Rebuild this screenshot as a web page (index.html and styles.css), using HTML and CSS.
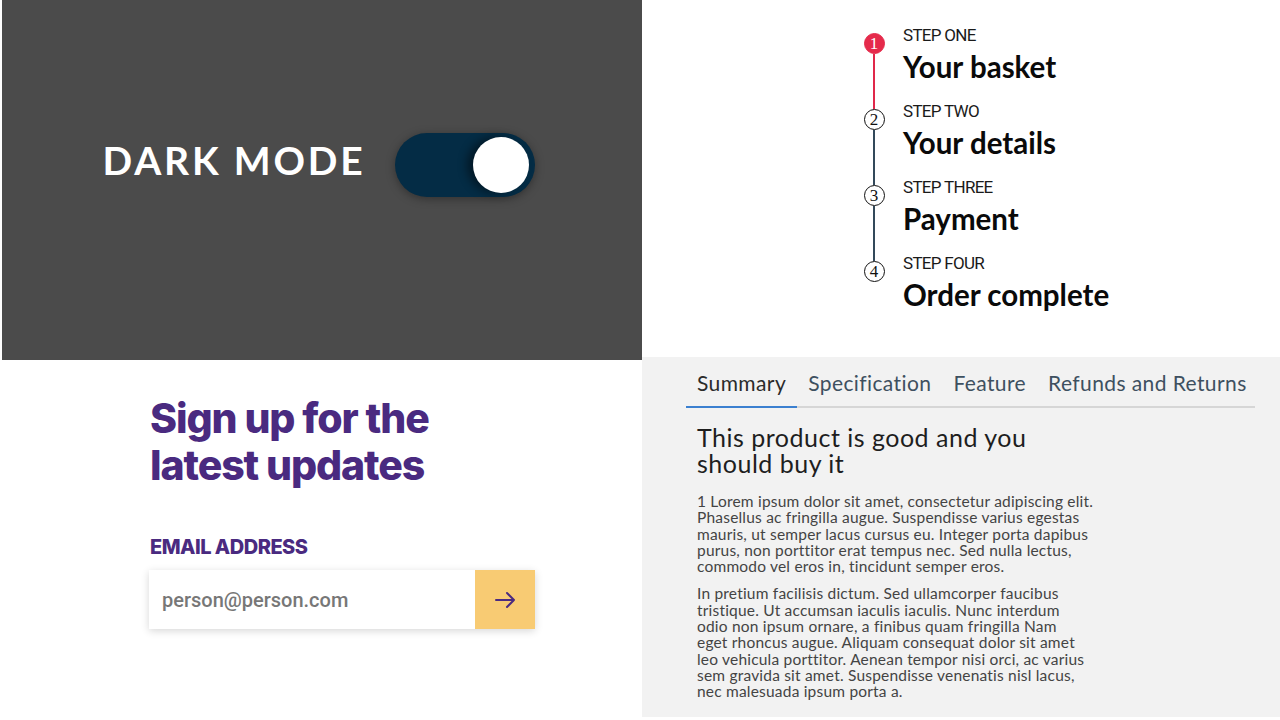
FILE: index.html
```html
<!DOCTYPE html>
<html lang="en">
<head>
<meta charset="utf-8">
<title>UI components</title>
<link rel="stylesheet" href="styles.css">
</head>
<body>
<main class="grid">
  <section class="panel panel-dark">
    <div class="mode">
      <span class="mode-label">DARK MODE</span>
      <button class="toggle" aria-pressed="true" aria-label="Dark mode"><span class="knob"></span></button>
    </div>
  </section>

  <section class="panel panel-steps">
    <ol class="steps">
      <li class="step done">
        <div class="marker"><span class="dot">1</span><span class="rail rail-red"></span></div>
        <div class="step-text"><span class="step-label">STEP ONE</span><span class="step-title">Your basket</span></div>
      </li>
      <li class="step">
        <div class="marker"><span class="dot">2</span><span class="rail"></span></div>
        <div class="step-text"><span class="step-label">STEP TWO</span><span class="step-title">Your details</span></div>
      </li>
      <li class="step">
        <div class="marker"><span class="dot">3</span><span class="rail"></span></div>
        <div class="step-text"><span class="step-label">STEP THREE</span><span class="step-title">Payment</span></div>
      </li>
      <li class="step last">
        <div class="marker"><span class="dot">4</span></div>
        <div class="step-text"><span class="step-label">STEP FOUR</span><span class="step-title">Order complete</span></div>
      </li>
    </ol>
  </section>

  <section class="panel panel-signup">
    <h2 class="signup-title">Sign up for the<br>latest updates</h2>
    <label class="signup-label" for="email">EMAIL ADDRESS</label>
    <div class="signup-field">
      <input id="email" class="signup-input" type="email" placeholder="person@person.com">
      <button class="signup-btn" aria-label="Submit">
        <svg width="24" height="24" viewBox="0 0 24 24" fill="none" stroke="#4b2a80" stroke-width="2" stroke-linecap="round" stroke-linejoin="round"><path d="M3 12h18M14 5l7 7-7 7"/></svg>
      </button>
    </div>
  </section>

  <section class="panel panel-tabs">
    <nav class="tabs">
      <a class="tab active">Summary</a>
      <a class="tab">Specification</a>
      <a class="tab">Feature</a>
      <a class="tab">Refunds and Returns</a>
    </nav>
    <article class="tab-body">
      <h3 class="tab-heading">This product is good and you<br>should buy it</h3>
      <p class="tab-text">1 Lorem ipsum dolor sit amet, consectetur adipiscing elit.<br>Phasellus ac fringilla augue. Suspendisse varius egestas<br>mauris, ut semper lacus cursus eu. Integer porta dapibus<br>purus, non porttitor erat tempus nec. Sed nulla lectus,<br>commodo vel eros in, tincidunt semper eros.</p>
      <p class="tab-text">In pretium facilisis dictum. Sed ullamcorper faucibus<br>tristique. Ut accumsan iaculis iaculis. Nunc interdum<br>odio non ipsum ornare, a finibus quam fringilla Nam<br>eget rhoncus augue. Aliquam consequat dolor sit amet<br>leo vehicula porttitor. Aenean tempor nisi orci, ac varius<br>sem gravida sit amet. Suspendisse venenatis nisl lacus,<br>nec malesuada ipsum porta a.</p>
    </article>
  </section>
</main>
</body>
</html>
```

FILE: styles.css
```css
* { box-sizing: border-box; }
html, body { margin: 0; padding: 0; background: #ffffff; }
body { width: 1280px; height: 720px; overflow: hidden; font-family: "Lato", "Liberation Sans", sans-serif; }

.grid {
  display: grid;
  grid-template-columns: 642px 638px;
  grid-template-rows: 360px 360px;
}

.panel { margin: 0; }

/* Dark mode */
.panel-dark {
  background: #4b4b4b;
  margin-left: 2px;
  display: flex;
  align-items: center;
  justify-content: center;
  padding: 0 6px 30px 0;
}
.mode { display: flex; align-items: center; gap: 30px; }
.mode-label {
  color: #ffffff;
  font-family: "Lato", sans-serif;
  font-weight: 700;
  font-size: 39px;
  letter-spacing: 2.8px;
  line-height: 1;
  margin-bottom: 10px;
}
.toggle {
  width: 140px;
  height: 64px;
  border: 0;
  border-radius: 32px;
  background: #042c45;
  box-shadow: 0 2px 10px rgba(0,0,0,0.35);
  display: flex;
  align-items: center;
  justify-content: flex-end;
  padding: 0 6px 0 0;
}
.knob {
  width: 56px;
  height: 56px;
  border-radius: 50%;
  background: #ffffff;
  box-shadow: -6px 0 10px rgba(0,0,0,0.45);
}

/* Steps */
.panel-steps { padding: 33px 0 0 221px; }
.steps { list-style: none; margin: 0; padding: 0; }
.step { display: flex; gap: 18px; height: 76px; }
.step.last { height: auto; }
.marker { width: 22px; display: flex; flex-direction: column; align-items: center; }
.dot {
  width: 21px; height: 21px; flex: none;
  border-radius: 50%;
  border: 1px solid #111;
  background: #fff;
  color: #111;
  font-family: "Liberation Serif", serif;
  font-size: 17px;
  line-height: 19px;
  text-align: center;
}
.done .dot { background: #e52a4b; border-color: #e52a4b; color: #fff; }
.rail { flex: 1; width: 2px; background: #33495a; }
.rail-red { background: #e0284a; }
.step-text { display: flex; flex-direction: column; margin-top: -8px; }
.step-label {
  font-family: "Roboto", sans-serif;
  font-size: 17px;
  letter-spacing: -0.7px;
  line-height: 20px;
  color: #1a1a1a;
}
.step-title {
  font-family: "Lato", sans-serif;
  font-weight: 700;
  font-size: 29.5px;
  line-height: 36px;
  margin-top: 4px;
  color: #0a0a0a;
}

/* Sign up */
.panel-signup { padding: 35px 0 0 149px; }
.signup-title {
  margin: 0;
  font-family: "Inter", sans-serif;
  font-weight: 800;
  font-size: 41px;
  line-height: 47px;
  letter-spacing: -1.1px;
  color: #4a2a80;
  padding-left: 1px;
}
.signup-label {
  display: block;
  margin-top: 46px;
  padding-left: 1px;
  font-family: "Inter", sans-serif;
  font-weight: 800;
  font-size: 20px;
  letter-spacing: -0.5px;
  line-height: 24px;
  color: #4a2a80;
}
.signup-field {
  display: flex;
  width: 386px;
  height: 59px;
  margin-top: 11px;
  box-shadow: 0 2px 8px rgba(0,0,0,0.16);
}
.signup-input {
  flex: 1;
  min-width: 0;
  border: 0;
  background: #fff;
  padding: 0 13px;
  font-family: "Roboto", sans-serif;
  font-weight: 500;
  font-size: 20px;
  color: #333;
  outline: none;
}
.signup-input::placeholder { color: #777777; }
.signup-btn {
  width: 60px;
  border: 0;
  background: #f8cb73;
  display: flex;
  align-items: center;
  justify-content: center;
  padding: 0;
}

/* Tabs */
.panel-tabs {
  background: #f2f2f2;
  margin-top: -3px;
  height: 360px;
  padding: 12px 25px 0 44px;
}
.tabs {
  display: flex;
  border-bottom: 2px solid #d6d6d6;
  width: 569px;
}
.tab {
  flex: none;
  white-space: nowrap;
  padding: 0 11px 9px;
  margin-bottom: -2px;
  border-bottom: 2px solid transparent;
  font-family: "Lato", sans-serif;
  font-size: 21px;
  letter-spacing: 0.4px;
  line-height: 28px;
  color: #3e5060;
}
.tab.active { color: #2b2b2b; border-bottom-color: #3b80d0; }
.tab-body { padding: 16px 0 0 11px; }
.tab-heading {
  margin: 0 0 17px;
  font-family: "Lato", sans-serif;
  font-weight: 400;
  font-size: 25px;
  line-height: 26px;
  letter-spacing: 0.5px;
  color: #1e1e1e;
}
.tab-text {
  margin: 0 0 11px;
  font-family: "Lato", sans-serif;
  font-size: 15.5px;
  line-height: 16.3px;
  letter-spacing: 0.2px;
  color: #444;
}
```
